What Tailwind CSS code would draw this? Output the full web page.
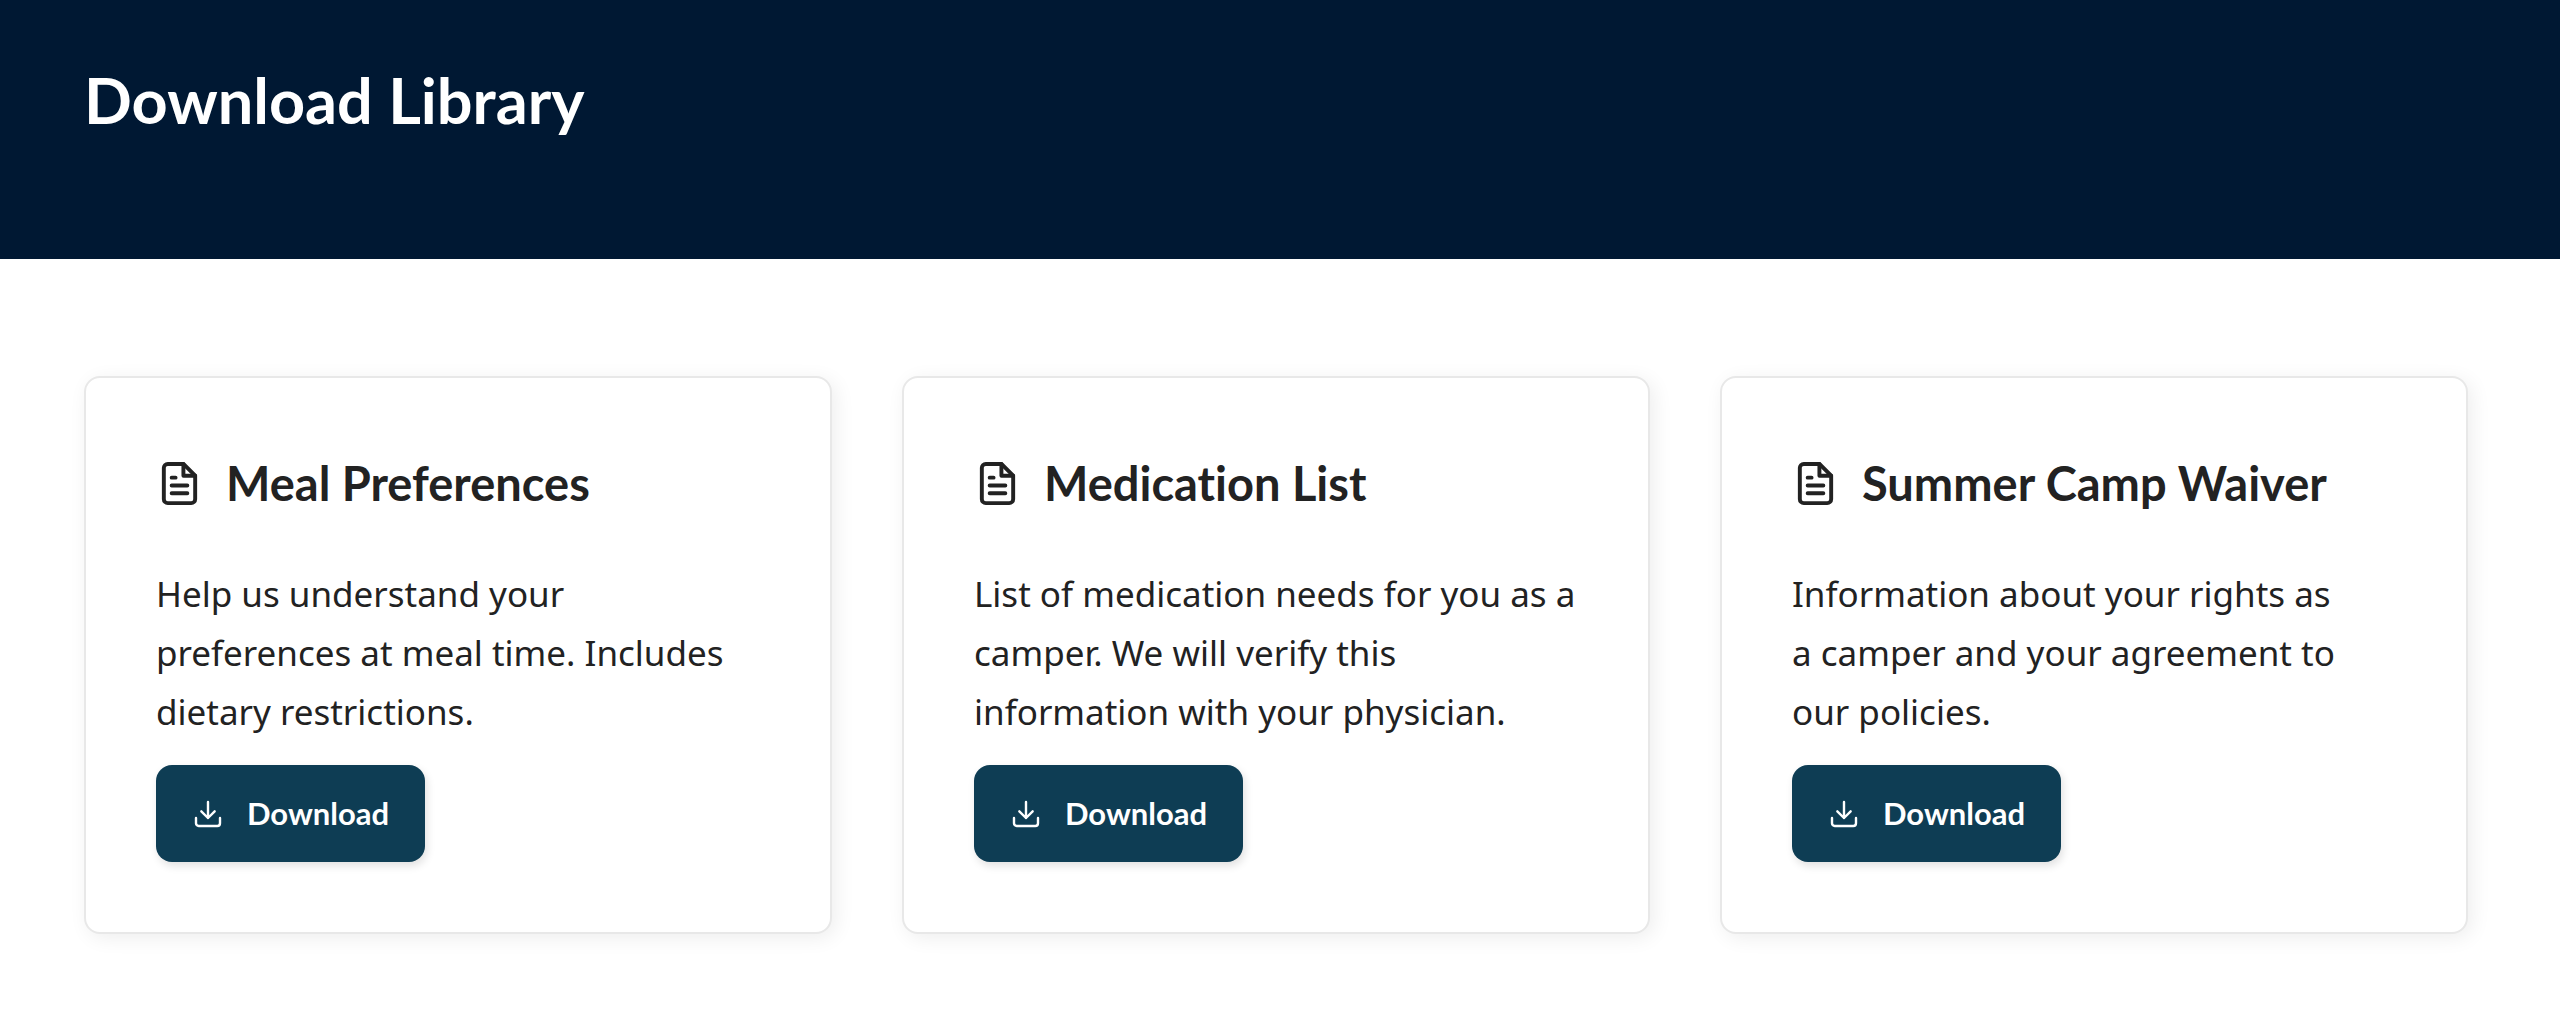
<!DOCTYPE html>
<html lang="en">
<head>
    <meta charset="UTF-8">
    <meta name="viewport" content="width=device-width, initial-scale=1.0">
    <title>Download Library</title>
    <script src="https://cdn.jsdelivr.net/npm/@tailwindcss/browser@4"></script>
</head>
<body class="bg-white text-[#222222] font-['Noto_Sans',sans-serif]">

    <!-- Header -->
    <header class="bg-[#001833] px-[84px] pt-[60px] pb-[119px]">
        <h1 class="font-['Lato',sans-serif] text-[63px] leading-[80px] font-bold text-white">Download Library</h1>
    </header>

    <!-- Downloads -->
    <main class="grid grid-cols-3 gap-[70px] pt-[117px] pb-[100px] pl-[84px] pr-[92px]">

        <section class="rounded-2xl border-2 border-[#e8e8e8] bg-white p-[70px] shadow-[4px_4px_20px_rgba(0,0,0,0.07)]">
            <h2 class="flex items-center gap-[23px] font-['Lato',sans-serif] text-[47px] leading-[70px] font-bold [font-variant-ligatures:none]">
                <svg class="size-[47px] shrink-0" viewBox="0 0 24 24" fill="none" stroke="currentColor" stroke-width="2" stroke-linecap="round" stroke-linejoin="round" aria-hidden="true"><path d="M14 2H6a2 2 0 0 0-2 2v16a2 2 0 0 0 2 2h12a2 2 0 0 0 2-2V8z"/><path d="M14 2v6h6M16 13H8M16 17H8M10 9H8"/></svg>
                Meal Preferences
            </h2>
            <p class="mt-[46px] text-[35px] leading-[59px]">Help us understand your preferences at meal time. Includes dietary restrictions.</p>
            <button type="button" class="mt-6 flex h-[97px] items-center gap-[23px] rounded-2xl bg-[#0e3d54] px-9 font-['Lato',sans-serif] text-[31px] font-bold text-white shadow-[2px_4px_8px_rgba(0,0,0,0.12)]">
                <svg class="size-8" viewBox="0 0 24 24" fill="none" stroke="currentColor" stroke-width="1.8" stroke-linecap="round" stroke-linejoin="round" aria-hidden="true"><path d="M21 15v4a2 2 0 0 1-2 2H5a2 2 0 0 1-2-2v-4"/><path d="M7 10l5 5 5-5M12 15V3"/></svg>
                Download
            </button>
        </section>

        <section class="rounded-2xl border-2 border-[#e8e8e8] bg-white p-[70px] shadow-[4px_4px_20px_rgba(0,0,0,0.07)]">
            <h2 class="flex items-center gap-[23px] font-['Lato',sans-serif] text-[47px] leading-[70px] font-bold [font-variant-ligatures:none]">
                <svg class="size-[47px] shrink-0" viewBox="0 0 24 24" fill="none" stroke="currentColor" stroke-width="2" stroke-linecap="round" stroke-linejoin="round" aria-hidden="true"><path d="M14 2H6a2 2 0 0 0-2 2v16a2 2 0 0 0 2 2h12a2 2 0 0 0 2-2V8z"/><path d="M14 2v6h6M16 13H8M16 17H8M10 9H8"/></svg>
                Medication List
            </h2>
            <p class="mt-[46px] text-[35px] leading-[59px]">List of medication needs for you as a camper. We will verify this information with your physician.</p>
            <button type="button" class="mt-6 flex h-[97px] items-center gap-[23px] rounded-2xl bg-[#0e3d54] px-9 font-['Lato',sans-serif] text-[31px] font-bold text-white shadow-[2px_4px_8px_rgba(0,0,0,0.12)]">
                <svg class="size-8" viewBox="0 0 24 24" fill="none" stroke="currentColor" stroke-width="1.8" stroke-linecap="round" stroke-linejoin="round" aria-hidden="true"><path d="M21 15v4a2 2 0 0 1-2 2H5a2 2 0 0 1-2-2v-4"/><path d="M7 10l5 5 5-5M12 15V3"/></svg>
                Download
            </button>
        </section>

        <section class="rounded-2xl border-2 border-[#e8e8e8] bg-white p-[70px] shadow-[4px_4px_20px_rgba(0,0,0,0.07)]">
            <h2 class="flex items-center gap-[23px] font-['Lato',sans-serif] text-[47px] leading-[70px] font-bold [font-variant-ligatures:none]">
                <svg class="size-[47px] shrink-0" viewBox="0 0 24 24" fill="none" stroke="currentColor" stroke-width="2" stroke-linecap="round" stroke-linejoin="round" aria-hidden="true"><path d="M14 2H6a2 2 0 0 0-2 2v16a2 2 0 0 0 2 2h12a2 2 0 0 0 2-2V8z"/><path d="M14 2v6h6M16 13H8M16 17H8M10 9H8"/></svg>
                Summer Camp Waiver
            </h2>
            <p class="mt-[46px] text-[35px] leading-[59px]">Information about your rights as a&nbsp;camper and your agreement to our policies.</p>
            <button type="button" class="mt-6 flex h-[97px] items-center gap-[23px] rounded-2xl bg-[#0e3d54] px-9 font-['Lato',sans-serif] text-[31px] font-bold text-white shadow-[2px_4px_8px_rgba(0,0,0,0.12)]">
                <svg class="size-8" viewBox="0 0 24 24" fill="none" stroke="currentColor" stroke-width="1.8" stroke-linecap="round" stroke-linejoin="round" aria-hidden="true"><path d="M21 15v4a2 2 0 0 1-2 2H5a2 2 0 0 1-2-2v-4"/><path d="M7 10l5 5 5-5M12 15V3"/></svg>
                Download
            </button>
        </section>

    </main>

</body>
</html>
